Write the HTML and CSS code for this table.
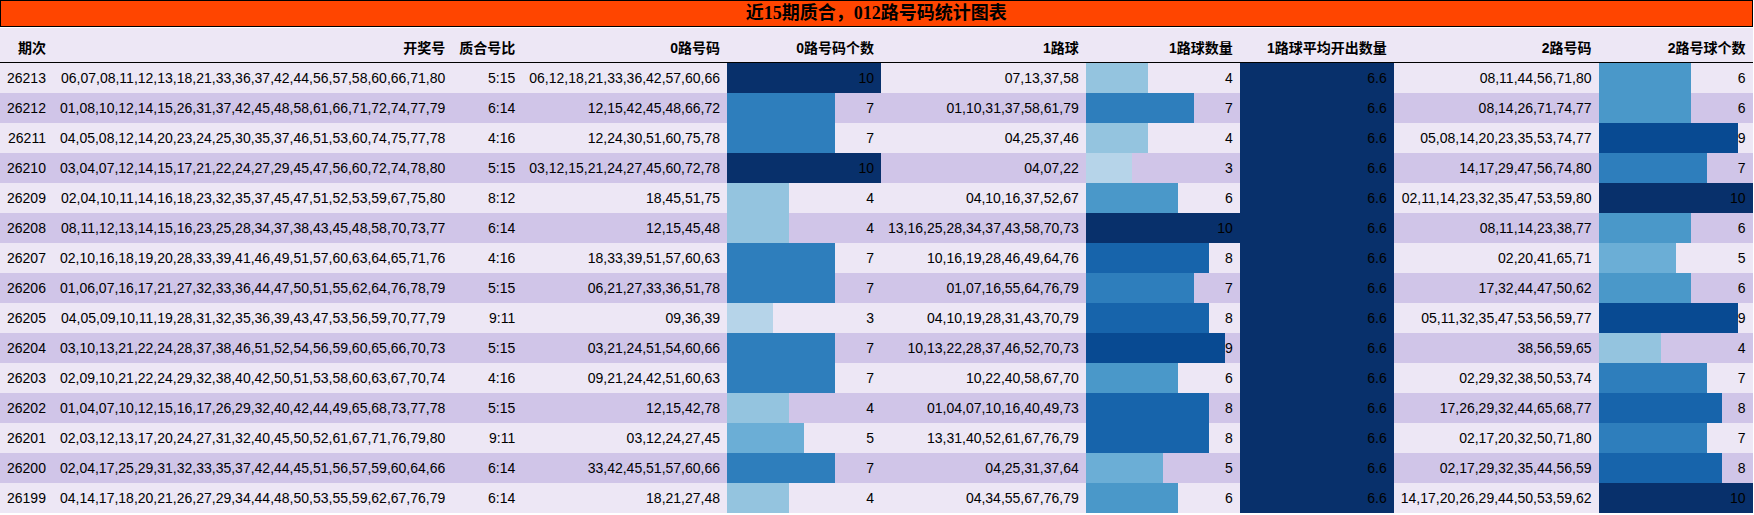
FILE: index.html
```html
<!DOCTYPE html>
<html lang="zh">
<head>
<meta charset="utf-8">
<title>近15期质合，012路号码统计图表</title>
<link rel="stylesheet" href="styles.css">
</head>
<body>
<table class="stats">
  <caption class="title">近15期质合，012路号码统计图表</caption>
  <thead>
    <tr>
      <th>期次</th><th>开奖号</th><th>质合号比</th><th>0路号码</th><th class="wide">0路号码个数</th><th>1路球</th><th class="wide">1路球数量</th><th class="wide">1路球平均开出数量</th><th>2路号码</th><th class="wide">2路号球个数</th>
    </tr>
  </thead>
  <tbody>
    <tr><td>26213</td><td>06,07,08,11,12,13,18,21,33,36,37,42,44,56,57,58,60,66,71,80</td><td>5:15</td><td>06,12,18,21,33,36,42,57,60,66</td><td class="bar v10">10</td><td>07,13,37,58</td><td class="bar v4">4</td><td class="bar avg">6.6</td><td>08,11,44,56,71,80</td><td class="bar v6">6</td></tr>
    <tr><td>26212</td><td>01,08,10,12,14,15,26,31,37,42,45,48,58,61,66,71,72,74,77,79</td><td>6:14</td><td>12,15,42,45,48,66,72</td><td class="bar v7">7</td><td>01,10,31,37,58,61,79</td><td class="bar v7">7</td><td class="bar avg">6.6</td><td>08,14,26,71,74,77</td><td class="bar v6">6</td></tr>
    <tr><td>26211</td><td>04,05,08,12,14,20,23,24,25,30,35,37,46,51,53,60,74,75,77,78</td><td>4:16</td><td>12,24,30,51,60,75,78</td><td class="bar v7">7</td><td>04,25,37,46</td><td class="bar v4">4</td><td class="bar avg">6.6</td><td>05,08,14,20,23,35,53,74,77</td><td class="bar v9">9</td></tr>
    <tr><td>26210</td><td>03,04,07,12,14,15,17,21,22,24,27,29,45,47,56,60,72,74,78,80</td><td>5:15</td><td>03,12,15,21,24,27,45,60,72,78</td><td class="bar v10">10</td><td>04,07,22</td><td class="bar v3">3</td><td class="bar avg">6.6</td><td>14,17,29,47,56,74,80</td><td class="bar v7">7</td></tr>
    <tr><td>26209</td><td>02,04,10,11,14,16,18,23,32,35,37,45,47,51,52,53,59,67,75,80</td><td>8:12</td><td>18,45,51,75</td><td class="bar v4">4</td><td>04,10,16,37,52,67</td><td class="bar v6">6</td><td class="bar avg">6.6</td><td>02,11,14,23,32,35,47,53,59,80</td><td class="bar v10">10</td></tr>
    <tr><td>26208</td><td>08,11,12,13,14,15,16,23,25,28,34,37,38,43,45,48,58,70,73,77</td><td>6:14</td><td>12,15,45,48</td><td class="bar v4">4</td><td>13,16,25,28,34,37,43,58,70,73</td><td class="bar v10">10</td><td class="bar avg">6.6</td><td>08,11,14,23,38,77</td><td class="bar v6">6</td></tr>
    <tr><td>26207</td><td>02,10,16,18,19,20,28,33,39,41,46,49,51,57,60,63,64,65,71,76</td><td>4:16</td><td>18,33,39,51,57,60,63</td><td class="bar v7">7</td><td>10,16,19,28,46,49,64,76</td><td class="bar v8">8</td><td class="bar avg">6.6</td><td>02,20,41,65,71</td><td class="bar v5">5</td></tr>
    <tr><td>26206</td><td>01,06,07,16,17,21,27,32,33,36,44,47,50,51,55,62,64,76,78,79</td><td>5:15</td><td>06,21,27,33,36,51,78</td><td class="bar v7">7</td><td>01,07,16,55,64,76,79</td><td class="bar v7">7</td><td class="bar avg">6.6</td><td>17,32,44,47,50,62</td><td class="bar v6">6</td></tr>
    <tr><td>26205</td><td>04,05,09,10,11,19,28,31,32,35,36,39,43,47,53,56,59,70,77,79</td><td>9:11</td><td>09,36,39</td><td class="bar v3">3</td><td>04,10,19,28,31,43,70,79</td><td class="bar v8">8</td><td class="bar avg">6.6</td><td>05,11,32,35,47,53,56,59,77</td><td class="bar v9">9</td></tr>
    <tr><td>26204</td><td>03,10,13,21,22,24,28,37,38,46,51,52,54,56,59,60,65,66,70,73</td><td>5:15</td><td>03,21,24,51,54,60,66</td><td class="bar v7">7</td><td>10,13,22,28,37,46,52,70,73</td><td class="bar v9">9</td><td class="bar avg">6.6</td><td>38,56,59,65</td><td class="bar v4">4</td></tr>
    <tr><td>26203</td><td>02,09,10,21,22,24,29,32,38,40,42,50,51,53,58,60,63,67,70,74</td><td>4:16</td><td>09,21,24,42,51,60,63</td><td class="bar v7">7</td><td>10,22,40,58,67,70</td><td class="bar v6">6</td><td class="bar avg">6.6</td><td>02,29,32,38,50,53,74</td><td class="bar v7">7</td></tr>
    <tr><td>26202</td><td>01,04,07,10,12,15,16,17,26,29,32,40,42,44,49,65,68,73,77,78</td><td>5:15</td><td>12,15,42,78</td><td class="bar v4">4</td><td>01,04,07,10,16,40,49,73</td><td class="bar v8">8</td><td class="bar avg">6.6</td><td>17,26,29,32,44,65,68,77</td><td class="bar v8">8</td></tr>
    <tr><td>26201</td><td>02,03,12,13,17,20,24,27,31,32,40,45,50,52,61,67,71,76,79,80</td><td>9:11</td><td>03,12,24,27,45</td><td class="bar v5">5</td><td>13,31,40,52,61,67,76,79</td><td class="bar v8">8</td><td class="bar avg">6.6</td><td>02,17,20,32,50,71,80</td><td class="bar v7">7</td></tr>
    <tr><td>26200</td><td>02,04,17,25,29,31,32,33,35,37,42,44,45,51,56,57,59,60,64,66</td><td>6:14</td><td>33,42,45,51,57,60,66</td><td class="bar v7">7</td><td>04,25,31,37,64</td><td class="bar v5">5</td><td class="bar avg">6.6</td><td>02,17,29,32,35,44,56,59</td><td class="bar v8">8</td></tr>
    <tr><td>26199</td><td>04,14,17,18,20,21,26,27,29,34,44,48,50,53,55,59,62,67,76,79</td><td>6:14</td><td>18,21,27,48</td><td class="bar v4">4</td><td>04,34,55,67,76,79</td><td class="bar v6">6</td><td class="bar avg">6.6</td><td>14,17,20,26,29,44,50,53,59,62</td><td class="bar v10">10</td></tr>
  </tbody>
</table>
</body>
</html>
```

FILE: styles.css
```css
html, body {
  margin: 0;
  padding: 0;
  background: #ffffff;
}

.stats {
  border-collapse: separate;
  border-spacing: 0;
  font-family: "Liberation Sans", "Noto Sans CJK SC", sans-serif;
  font-size: 14px;
  color: #000;
}

.title {
  caption-side: top;
  background: #ff4500;
  border: 1px solid #000;
  height: 25px;
  line-height: 25px;
  margin-bottom: 1px;
  font-family: "Liberation Serif", "Noto Sans CJK SC", serif;
  font-size: 18px;
  font-weight: bold;
  text-align: center;
  color: #000;
}

.stats th {
  background: #ede7f5;
  font-weight: bold;
  text-align: right;
  padding: 6px 7px 0;
  line-height: 28px;
  border-bottom: 1px solid #000;
  white-space: nowrap;
}

.stats th.wide {
  width: 10em;
}

.stats td {
  text-align: right;
  padding: 0 7px;
  height: 30px;
  line-height: 30px;
  white-space: nowrap;
  box-sizing: border-box;
}

.stats tbody tr:nth-child(odd) {
  background: #ede7f5;
}

.stats tbody tr:nth-child(even) {
  background: #d0c5e8;
}

.bar.v3 { background: linear-gradient(90deg, #b6d4e9 30%, transparent 30%); }
.bar.v4 { background: linear-gradient(90deg, #94c4df 40%, transparent 40%); }
.bar.v5 { background: linear-gradient(90deg, #6baed6 50%, transparent 50%); }
.bar.v6 { background: linear-gradient(90deg, #4a98c9 60%, transparent 60%); }
.bar.v7 { background: linear-gradient(90deg, #2e7ebc 70%, transparent 70%); }
.bar.v8 { background: linear-gradient(90deg, #1764ab 80%, transparent 80%); }
.bar.v9 { background: linear-gradient(90deg, #084a92 90%, transparent 90%); }
.bar.v10 { background: #08306b; }
.bar.avg { background: #08306b; }
```
